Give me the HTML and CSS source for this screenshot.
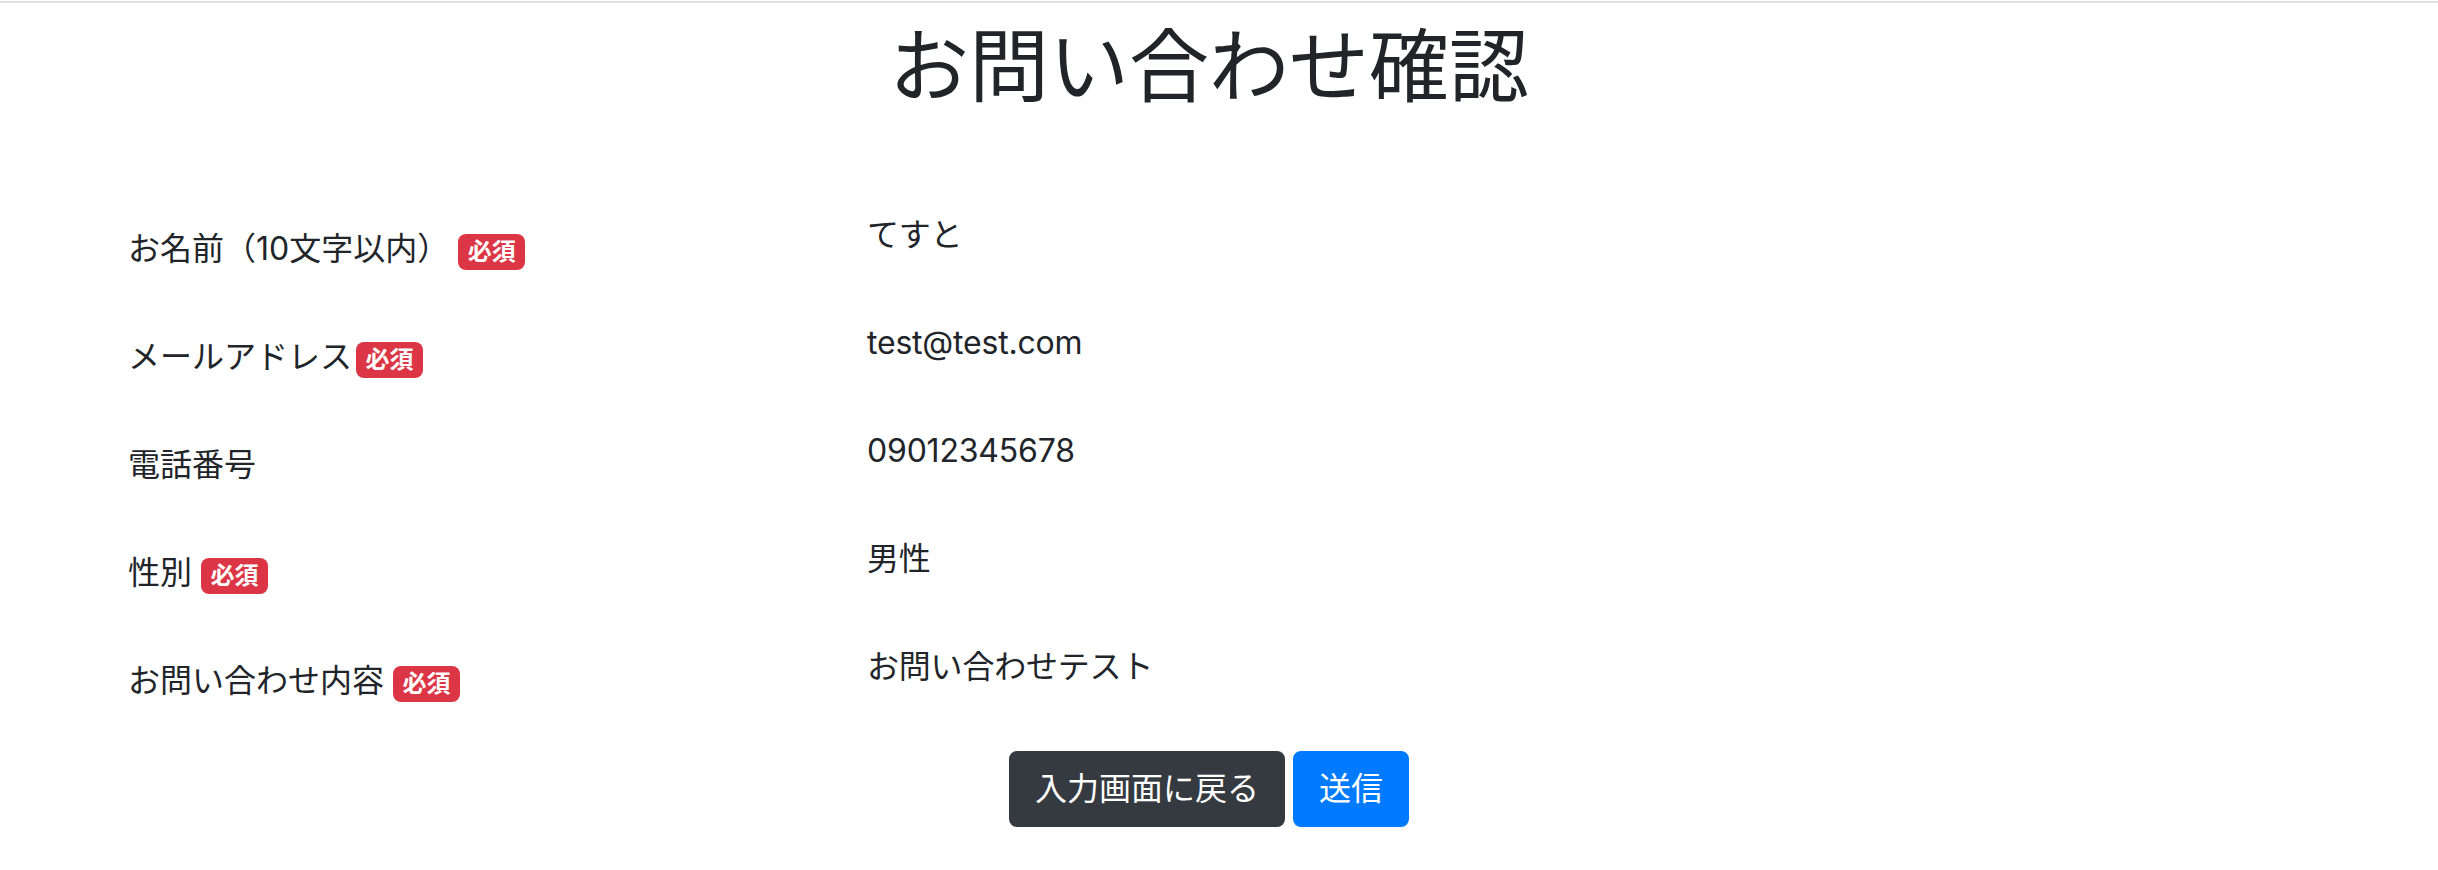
FILE: index.html
```html
<!DOCTYPE html>
<html lang="ja">
<head>
<meta charset="utf-8">
<title>お問い合わせ確認</title>
<link rel="stylesheet" href="styles.css">
</head>
<body>
<div class="topline"></div>
<main class="page">
  <h1 class="title">お問い合わせ確認</h1>
  <form class="confirm">
    <div class="field">
      <div class="field-label">お名前（10文字以内） <span class="badge">必須</span></div>
      <div class="field-value">てすと</div>
    </div>
    <div class="field">
      <div class="field-label">メールアドレス<span class="badge badge-tight">必須</span></div>
      <div class="field-value">test@test.com</div>
    </div>
    <div class="field">
      <div class="field-label">電話番号</div>
      <div class="field-value">09012345678</div>
    </div>
    <div class="field">
      <div class="field-label">性別 <span class="badge">必須</span></div>
      <div class="field-value">男性</div>
    </div>
    <div class="field">
      <div class="field-label">お問い合わせ内容 <span class="badge">必須</span></div>
      <div class="field-value">お問い合わせテスト</div>
    </div>
    <div class="actions">
      <button type="button" class="btn btn-dark">入力画面に戻る</button>
      <button type="button" class="btn btn-primary">送信</button>
    </div>
  </form>
</main>
</body>
</html>
```

FILE: styles.css
```css
html, body {
  margin: 0;
  padding: 0;
  background: #ffffff;
}

body {
  color: #212529;
  font-family: Inter, "Noto Sans CJK JP", sans-serif;
  font-size: 32px;
  line-height: 48px;
}

.topline {
  height: 2px;
  margin-top: 1px;
  background: #e0e0e0;
}

.page {
  width: 2418px;
}

.title {
  margin: 15px 0 0;
  font-size: 80px;
  line-height: 96px;
  font-weight: 400;
  text-align: center;
}

.confirm {
  margin-top: 97px;
}

.field {
  display: grid;
  grid-template-columns: 739px 1fr;
  padding-left: 128px;
  margin-bottom: 32px;
}

.field-label {
  padding: 14px 0;
}

.field-value {
  padding: 0;
  letter-spacing: -0.2px;
}

.badge {
  display: inline-block;
  padding: 6px 9.6px;
  font-size: 24px;
  font-weight: 700;
  line-height: 1;
  color: #ffffff;
  background: #dc3545;
  border-radius: 8px;
  vertical-align: baseline;
}

.badge-tight {
  margin-left: 4px;
}

.actions {
  display: flex;
  justify-content: center;
  gap: 8px;
}

.btn {
  display: inline-block;
  font-family: inherit;
  font-size: 32px;
  line-height: 48px;
  font-weight: 400;
  color: #ffffff;
  padding: 12px 24px;
  border: 2px solid transparent;
  border-radius: 8px;
  margin: 0;
  cursor: pointer;
}

.btn-dark {
  background: #343a40;
  border-color: #343a40;
}

.btn-primary {
  background: #007bff;
  border-color: #007bff;
}
```
